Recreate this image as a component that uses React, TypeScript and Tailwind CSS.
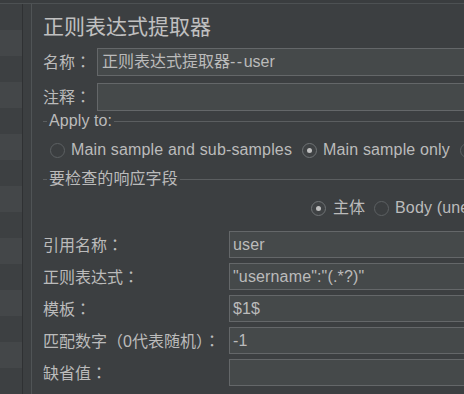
import React from "react";

const font = "font-['Liberation_Sans','Noto_Sans_CJK_SC',sans-serif]";
const tc = "font-['Noto_Sans_CJK_TC',sans-serif]";

function Label({ text }: { text: string }) {
  const parts = text.split(/([：（）])/);
  return (
    <>
      {parts.map((p, i) =>
        /^[：（）]$/.test(p) ? (
          <span key={i} className={tc}>{p}</span>
        ) : (
          <span key={i}>{p}</span>
        )
      )}
    </>
  );
}

function Radio({ checked }: { checked?: boolean }) {
  return (
    <span
      className={`w-[15px] h-[15px] rounded-full border shrink-0 flex items-center justify-center ${
        checked ? "border-[#6f7375] bg-[#3f4244]" : "border-[#5d6163] bg-[#3b3e40]"
      }`}
    >
      {checked && <span className="w-[5px] h-[5px] rounded-full bg-[#c0c0c0]" />}
    </span>
  );
}

function Legend({ text }: { text: string }) {
  return (
    <div className="h-[18px] flex items-center">
      <div className="w-[4px] h-px bg-[#5b5e60]" />
      <span className="px-[2px] text-[16px] leading-[18px] whitespace-nowrap tracking-[0.1px]">{text}</span>
      <div className="flex-1 h-px bg-[#5b5e60]" />
    </div>
  );
}

function Row({ label, value }: { label: string; value: string }) {
  return (
    <div className="flex items-center h-[27px]">
      <div className="w-[186px] shrink-0 text-[16px] whitespace-nowrap">
        <Label text={label} />
      </div>
      <div className="flex-1 h-[27px] bg-[#45494a] border border-[#646769] pl-[3px] text-[16px] leading-[25px] whitespace-nowrap tracking-[0.15px]">
        {value}
      </div>
    </div>
  );
}

export default function App() {
  const rows = Array.from({ length: 15 });
  return (
    <div className={`w-[464px] h-[394px] overflow-hidden bg-[#3c3f41] text-[#bbbbbb] flex flex-col ${font}`}>
      <div className="h-[4px] shrink-0 bg-[#3a3d3f] border-b border-[#4d5153]" />
      <div className="flex flex-1 min-h-0">
        <div className="w-[22px] shrink-0 flex flex-col overflow-hidden">
          {rows.map((_, i) => (
            <div key={i} className={`h-[26px] shrink-0 ${i % 2 === 0 ? "bg-[#3d4042]" : "bg-[#444749]"}`} />
          ))}
        </div>
        <div className="w-px shrink-0 bg-[#2f3133]" />
        <div className="w-[8px] shrink-0" />
        <div className="w-px shrink-0 bg-[#505456]" />
        <div className="w-[520px] shrink-0 pl-[11px] flex flex-col">
          <div className="mt-[8px] h-[30px] leading-[30px] text-[21px] text-[#c0c0c0] whitespace-nowrap">正则表达式提取器</div>
          <div className="mt-[6px] flex items-center h-[28px]">
            <div className="w-[54px] shrink-0 text-[16px]">
              <Label text="名称：" />
            </div>
            <div className="flex-1 h-[28px] bg-[#45494a] border border-[#646769] pl-[4px] text-[16px] leading-[26px] whitespace-nowrap">
              正则表达式提取器<span className="tracking-[1.5px]">--</span>user
            </div>
          </div>
          <div className="mt-[7px] flex items-center h-[28px]">
            <div className="w-[54px] shrink-0 text-[16px]">
              <Label text="注释：" />
            </div>
            <div className="flex-1 h-[28px] bg-[#45494a] border border-[#646769]" />
          </div>
          <div className="mt-[1px]">
            <Legend text="Apply to:" />
          </div>
          <div className="mt-[7px] h-[26px] flex items-center pl-[7px] text-[16px] whitespace-nowrap tracking-[0.15px]">
            <Radio />
            <span className="ml-[6px]">Main sample and sub-samples</span>
            <span className="ml-[10px]"><Radio checked /></span>
            <span className="ml-[6px]">Main sample only</span>
            <span className="ml-[10px]"><Radio /></span>
          </div>
          <div className="mt-[7px]">
            <Legend text="要检查的响应字段" />
          </div>
          <div className="mt-[7px] h-[26px] flex items-center pl-[268px] text-[16px] whitespace-nowrap">
            <Radio checked />
            <span className="ml-[7px]">主体</span>
            <span className="ml-[9px]"><Radio /></span>
            <span className="ml-[6px] tracking-[0.15px]">Body (une</span>
          </div>
          <div className="mt-[10px] flex flex-col gap-[5px]">
            <Row label="引用名称：" value="user" />
            <Row label="正则表达式：" value={'"username":"(.*?)"'} />
            <Row label="模板：" value="$1$" />
            <Row label="匹配数字（0代表随机）：" value="-1" />
            <Row label="缺省值：" value="" />
          </div>
        </div>
      </div>
    </div>
  );
}
